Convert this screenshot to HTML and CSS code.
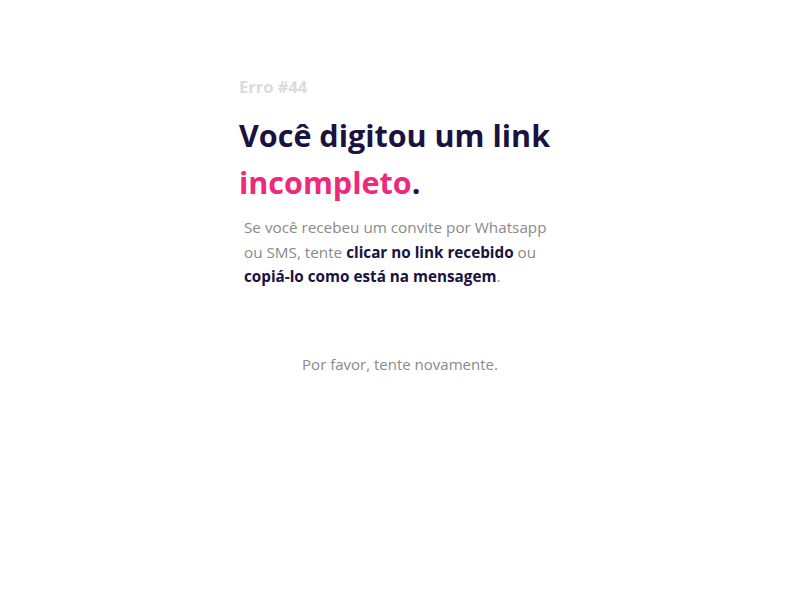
FILE: index.html
```html
<!DOCTYPE html>
<html lang="pt-BR">
<head>
<meta charset="utf-8">
<title>Erro #44</title>
<link rel="stylesheet" href="styles.css">
</head>
<body>
<main class="page">
  <section class="card">
    <p class="code">Erro #44</p>
    <h1 class="title">Você digitou um link <span class="accent">incompleto</span>.</h1>
    <p class="text">Se você recebeu um convite por Whatsapp ou SMS, tente <strong>clicar no link recebido</strong> ou <strong>copiá-lo como está na mensagem</strong>.</p>
    <p class="retry">Por favor, tente novamente.</p>
  </section>
</main>
</body>
</html>
```
FILE: styles.css
```css
* { box-sizing: border-box; }
html, body { margin: 0; padding: 0; background: #fff; }
body { font-family: "Open Sans", "Noto Sans", sans-serif; }
.page { display: flex; justify-content: center; padding-top: 76px; }
.card { width: 322px; }
.code { margin: 0; font-size: 16.5px; font-weight: 700; color: #dcdcdc; line-height: 22px; }
.title { margin: 14px 0 0; font-size: 30.5px; font-weight: 700; line-height: 47px; color: #1a1240; }
.accent { color: #f0287a; }
.text { margin: 9px 0 0 5px; width: 317px; font-size: 15.25px; line-height: 24.5px; color: #8a8a8a; }
.text strong { color: #1a1240; font-weight: 700; }
.retry { margin: 65px 0 0; text-align: center; font-size: 15px; color: #8a8a8a; }
```
